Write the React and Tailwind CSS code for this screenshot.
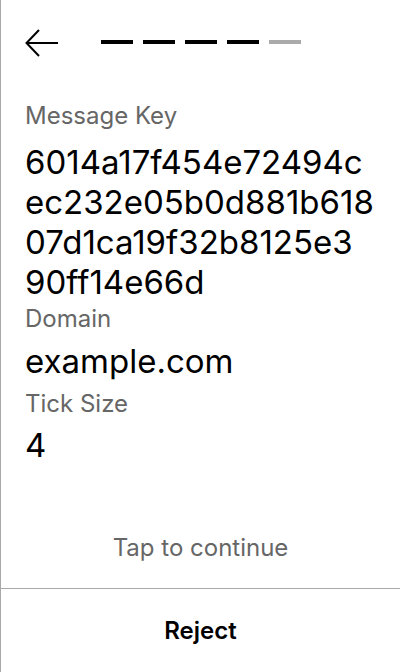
const messageKey = '6014a17f454e72494cec232e05b0d881b61807d1ca19f32b8125e390ff14e66d';

export default function App() {
  const steps = [true, true, true, true, false];
  // wrap the key in chunks of 18 like the device does
  const keyLines = messageKey.match(/.{1,18}/g);

  return (
    <div
      className="flex h-[672px] w-[400px] flex-col border-l border-[#a8a8a8] bg-white text-black"
      style={{ fontFamily: 'Inter, "Noto Sans", sans-serif' }}
    >
      {/* Header: back arrow + progress */}
      <div className="flex h-[84px] items-center px-6">
        <svg className="mt-[2px]" width="34" height="28" viewBox="0 0 34 28" fill="none" stroke="black" strokeWidth="2">
          <path d="M33 14H2" />
          <path d="M14 1L1.5 14L14 27" />
        </svg>
        <div className="ml-[42px] flex gap-[10px]">
          {steps.map((done, i) => (
            <div key={i} className={`h-[4px] w-[32px] ${done ? 'bg-black' : 'bg-[#aaaaaa]'}`} />
          ))}
        </div>
      </div>

      {/* Details */}
      <div className="flex flex-1 flex-col px-6 pt-[18px]">
        <p className="text-[24px] leading-[28px] text-[#666666]">Message Key</p>
        <div className="mt-[12px] text-[33px] leading-[40px]">
          {keyLines.map((line, i) => (
            <div key={i}>{line}</div>
          ))}
        </div>
        <p className="mt-[3px] text-[24px] leading-[28px] text-[#666666]">Domain</p>
        <p className="mt-[8px] text-[33px] leading-[40px]">example.com</p>
        <p className="mt-[9px] text-[24px] leading-[28px] text-[#666666]">Tick Size</p>
        <p className="mt-[7px] text-[33px] leading-[40px]">4</p>

        <div className="mt-auto pb-[26px] text-center text-[24px] leading-[28px] text-[#666666]">
          Tap to continue
        </div>
      </div>

      {/* Footer */}
      <div className="flex h-[84px] items-center justify-center border-t border-[#aaaaaa]">
        <span className="text-[24px] leading-[28px] font-semibold">Reject</span>
      </div>
    </div>
  );
}
